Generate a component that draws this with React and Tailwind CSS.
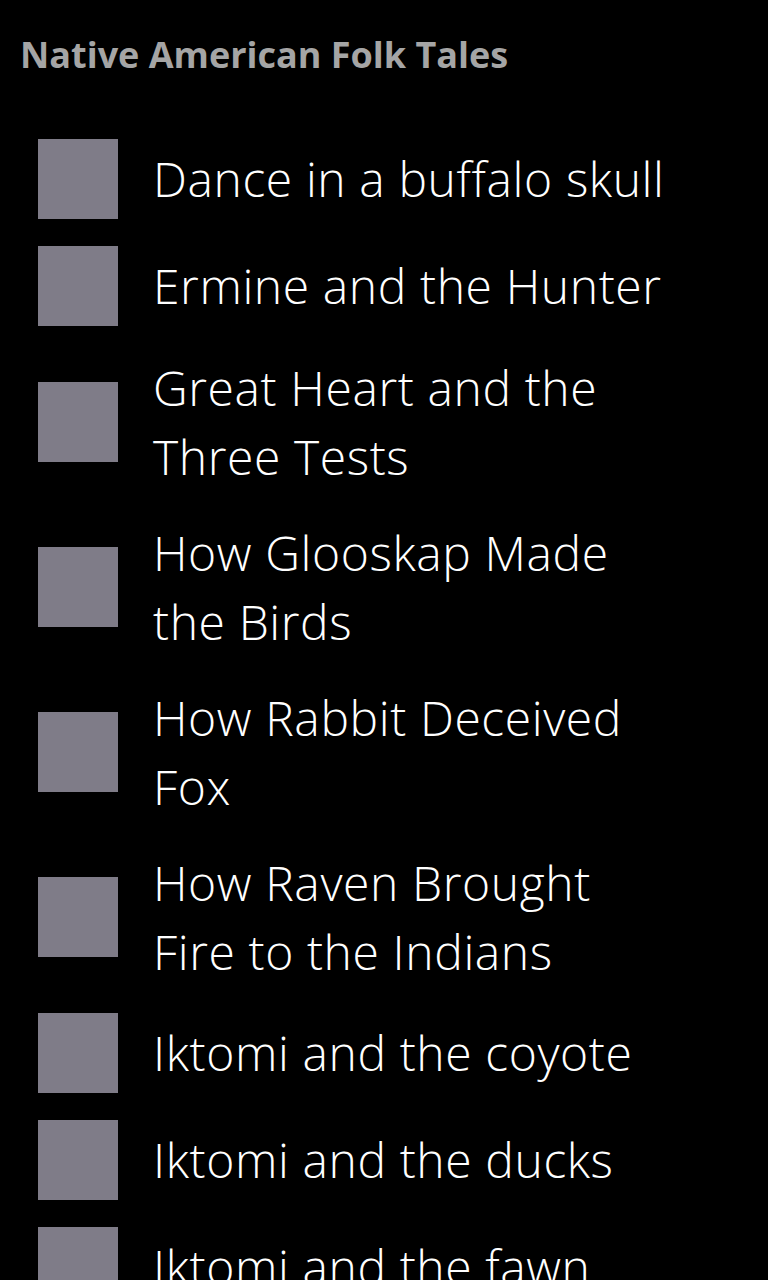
const tales = [
    ["Dance in a buffalo skull"],
    ["Ermine and the Hunter"],
    ["Great Heart and the", "Three Tests"],
    ["How Glooskap Made", "the Birds"],
    ["How Rabbit Deceived", "Fox"],
    ["How Raven Brought", "Fire to the Indians"],
    ["Iktomi and the coyote"],
    ["Iktomi and the ducks"],
    ["Iktomi and the fawn"],
];

const TaleRow = ({lines}) => (
    <div className="flex items-center py-[13.5px]">
        <div className="w-[80px] h-[80px] ml-[38px] shrink-0 bg-[#7f7c88]" />
        <div className="ml-[35px] text-white text-[48px] leading-[69px] tracking-[0.6px] font-light">
            {lines.map((line, i) => (
                <div key={i} className="whitespace-nowrap">{line}</div>
            ))}
        </div>
    </div>
);

export default function App() {
    return (
        <div className="w-[768px] h-[1280px] overflow-hidden bg-black font-['Open_Sans',sans-serif]">
            <div className="pt-[31px] pl-[20px] text-[36px] leading-[48px] font-bold text-[#a5a5a5]">
                Native American Folk Tales
            </div>
            <div className="mt-[46px]">
                {tales.map((lines, i) => (
                    <TaleRow key={i} lines={lines} />
                ))}
            </div>
        </div>
    );
}
